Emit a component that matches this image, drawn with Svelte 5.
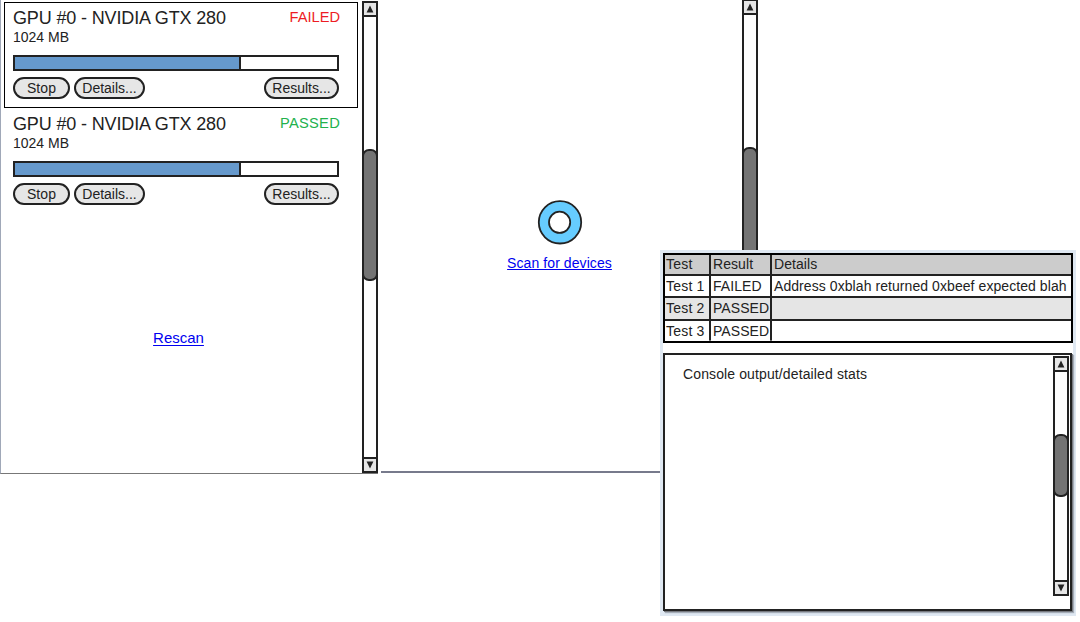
<script>
  const devices = [
    { name: 'GPU #0 - NVIDIA GTX 280', memory: '1024 MB', status: 'FAILED', progress: 69.6, selected: true },
    { name: 'GPU #0 - NVIDIA GTX 280', memory: '1024 MB', status: 'PASSED', progress: 69.6, selected: false }
  ];
  const tests = [
    { name: 'Test 1', result: 'FAILED', details: 'Address 0xblah returned 0xbeef expected blah' },
    { name: 'Test 2', result: 'PASSED', details: '' },
    { name: 'Test 3', result: 'PASSED', details: '' }
  ];
</script>

{#snippet scrollbar(before, thumb)}
  <div class="scrollbar">
    <div class="arrow up"><svg width="12" height="12" viewBox="0 0 12 12"><path d="M6 2.6 L9.4 9.4 H2.6 Z" /></svg></div>
    <div class="track">
      <div style:height="{before}px"></div>
      <div class="thumb" style:height="{thumb}px"></div>
    </div>
    <div class="arrow down"><svg width="12" height="12" viewBox="0 0 12 12"><path d="M6 9.4 L9.4 2.6 H2.6 Z" /></svg></div>
  </div>
{/snippet}

<main>
  <section class="window devices">
    <div class="list">
      {#each devices as d}
        <article class:selected={d.selected}>
          <header>
            <h2>{d.name}</h2>
            <span class="status" class:failed={d.status === 'FAILED'}>{d.status}</span>
          </header>
          <p>{d.memory}</p>
          <div class="progress"><div class="fill" style:width="{d.progress}%"></div></div>
          <div class="buttons">
            <button class="stop">Stop</button>
            <button class="details">Details...</button>
            <button class="results">Results...</button>
          </div>
        </article>
      {/each}
      <a class="rescan" href="#rescan">Rescan</a>
    </div>
    {@render scrollbar(132, 132)}
  </section>

  <section class="window scan">
    <div class="empty">
      <svg width="46" height="46" viewBox="0 0 46 46">
        <circle cx="23" cy="23.3" r="21.2" fill="#66ccff" stroke="#222" stroke-width="1.8" />
        <circle cx="22.6" cy="23.3" r="10.6" fill="#fff" stroke="#222" stroke-width="1.8" />
      </svg>
      <a href="#scan">Scan for devices</a>
    </div>
    {@render scrollbar(132, 132)}
  </section>

  <section class="window results-window">
    <div class="table">
      <div class="row head"><span>Test</span><span>Result</span><span>Details</span></div>
      {#each tests as t}
        <div class="row"><span>{t.name}</span><span>{t.result}</span><span>{t.details}</span></div>
      {/each}
    </div>
    <div class="console">
      <p>Console output/detailed stats</p>
      {@render scrollbar(62, 63)}
    </div>
  </section>
</main>

<style>
  :global(body) { margin: 0; background: #fff; }
  main {
    position: relative;
    width: 1080px;
    height: 622px;
    overflow: hidden;
    font: 14px/16px 'Liberation Sans', Arial, sans-serif;
    color: #222;
  }
  h2, p { margin: 0; font-weight: normal; }
  a { color: #0000f0; }
  .window { position: absolute; box-sizing: border-box; display: flex; }

  .scrollbar {
    box-sizing: border-box;
    width: 16px;
    flex: none;
    display: flex;
    flex-direction: column;
    border: 2px solid #222;
    background: #fff;
  }
  .arrow { height: 12px; background: #e6e6e6; flex: none; }
  .arrow svg { display: block; fill: #222; }
  .up { border-bottom: 2px solid #222; }
  .down { border-top: 2px solid #222; }
  .track { flex: 1; }
  .thumb {
    box-sizing: border-box;
    width: 16px;
    margin-left: -2px;
    border: 2px solid #222;
    border-radius: 7px;
    background: #737373;
  }

  .devices {
    left: 0;
    top: 0;
    width: 378px;
    height: 474px;
    padding-top: 1px;
    border-left: 1px solid #a0a8b8;
    border-bottom: 1px solid #777;
    justify-content: space-between;
  }
  .list { display: flex; flex-direction: column; padding: 1px 0 0 3px; width: 354px; }
  article {
    box-sizing: border-box;
    height: 106px;
    padding: 5px 18px 0 8px;
    border: 1px solid transparent;
  }
  article.selected { border-color: #000; }
  header { display: flex; justify-content: space-between; height: 21px; white-space: nowrap; }
  h2 { font-size: 18px; line-height: 20px; letter-spacing: -0.14px; }
  .status { font-size: 14.67px; line-height: 18px; letter-spacing: 0.28px; margin-right: -1px; color: #22b14c; }
  .status.failed { color: #ed1c24; letter-spacing: 0; }
  .progress {
    box-sizing: border-box;
    height: 16px;
    margin-top: 10px;
    border: 2px solid #222;
    width: 326px;
  }
  .fill { box-sizing: content-box; height: 12px; background: #6699cc; border-right: 2px solid #222; }
  .buttons { display: flex; gap: 4px; margin-top: 6px; width: 326px; }
  button {
    box-sizing: border-box;
    height: 22px;
    padding: 0;
    border: 2px solid #222;
    border-radius: 11px;
    background: #e6e6e6;
    color: #222;
    font: inherit;
    line-height: 18px;
  }
  .stop { width: 57px; letter-spacing: 0.1px; }
  .details { width: 71px; }
  .results { width: 75px; margin-left: auto; }
  .rescan { align-self: center; margin: 115px 5px 0 0; font-size: 15px; line-height: 18px; text-underline-offset: 2px; }

  .scan { left: 381px; top: -1px; width: 377px; height: 474px; border-bottom: 2px solid #777a8c; }
  .empty { flex: 1; display: flex; flex-direction: column; align-items: center; padding: 200px 4px 0 0; }
  .empty a { margin: 10px 0 0; letter-spacing: 0.08px; }

  .results-window {
    left: 660px;
    top: 250px;
    width: 416px;
    height: 366px;
    padding: 3px;
    flex-direction: column;
    background: linear-gradient(#fff, #fff) 3px 3px / 410px 358px no-repeat, #dfe8f2;
  }
  .table { box-sizing: border-box; width: 410px; border: 2px solid #000; flex: none; letter-spacing: 0.07px; }
  .row { display: grid; grid-template-columns: 44px 59px 1fr; gap: 2px; background: #222; height: 21px; border-bottom: 2px solid #222; box-sizing: border-box; line-height: 19px; }
  .row span { background: #fff; padding-left: 2px; white-space: nowrap; }
  .row span:first-child { padding-left: 1px; letter-spacing: 0.2px; }
  .row:nth-child(2) { height: 22px; line-height: 20px; }
  .row:nth-child(3) { height: 23px; line-height: 21px; }
  .row:nth-child(4) { height: 20px; line-height: 20px; border-bottom: 1px solid #777; }
  .head span { background: #ccc; }
  .row:nth-child(3) span { background: #e5e5e5; }
  .console {
    box-sizing: border-box;
    width: 409px;
    height: 258px;
    margin-top: 10px;
    padding: 1px 1px 13px 18px;
    border: 2px solid #222;
    background: #fff;
    box-shadow: 1px 1px 0 #777a80, 2px 2px 1px #a5adb8;
    display: flex;
    justify-content: space-between;
    letter-spacing: 0.12px;
  }
  .console p { padding-top: 10px; }
</style>
